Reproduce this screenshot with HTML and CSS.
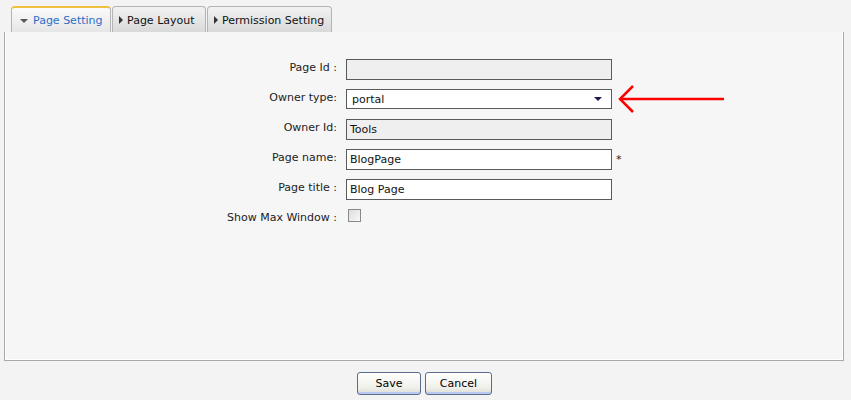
FILE: index.html
```html
<!DOCTYPE html>
<html>
<head>
<meta charset="utf-8">
<link rel="stylesheet" href="styles.css">
</head>
<body>
<div class="tabs">
  <div class="tab active"><span class="tri-down"></span>Page Setting</div>
  <div class="tab"><span class="tri-right"></span>Page Layout</div>
  <div class="tab"><span class="tri-right"></span>Permission Setting</div>
</div>
<div class="panel">
  <div class="form">
    <label>Page Id :</label>
    <div class="field readonly"></div>
    <span></span>

    <label>Owner type:</label>
    <div class="field select">portal<span class="sel-arrow"></span></div>
    <span></span>

    <label>Owner Id:</label>
    <div class="field readonly">Tools</div>
    <span></span>

    <label>Page name:</label>
    <div class="field">BlogPage</div>
    <span class="star">*</span>

    <label>Page title :</label>
    <div class="field">Blog Page</div>
    <span></span>

    <label>Show Max Window :</label>
    <div class="checkrow"><span class="checkbox"></span></div>
    <span></span>
  </div>
</div>
<div class="buttons">
  <button class="btn save">Save</button>
  <button class="btn cancel">Cancel</button>
</div>
<svg class="annot" width="120" height="40" viewBox="0 0 120 40">
  <path d="M4 20 H108" stroke="#ff0000" stroke-width="2.5" fill="none"/>
  <path d="M17 7 L4 20 L17 33" stroke="#ff0000" stroke-width="2.5" fill="none" stroke-linejoin="miter"/>
</svg>
</body>
</html>
```

FILE: styles.css
```css
html, body {
  margin: 0;
  padding: 0;
  background: #f3f3f3;
  font-family: "DejaVu Sans", Verdana, sans-serif;
  font-size: 11px;
  color: #222;
}
body {
  width: 851px;
  height: 400px;
  position: relative;
  overflow: hidden;
}
.tabs {
  display: flex;
  padding: 6px 0 0 11px;
  gap: 1px;
  height: 26px;
}
.tab {
  box-sizing: border-box;
  height: 26px;
  display: flex;
  align-items: center;
  padding: 1px 6px 0 6px;
  border: 1px solid #b4b4b4;
  border-bottom: none;
  border-radius: 4px 4px 0 0;
  background: linear-gradient(#f2f2f2, #d9d9d9);
  color: #111;
}
.tab.active {
  background: linear-gradient(#fafafa, #e6e6e6);
  border-top: 2px solid #f0c040;
  color: #2b6fc8;
  padding-top: 0;
}
.tab:nth-child(1) { width: 100px; }
.tab:nth-child(2) { width: 94px; }
.tab:nth-child(3) { width: 125px; }
.tri-down {
  width: 0; height: 0;
  border-left: 4px solid transparent;
  border-right: 4px solid transparent;
  border-top: 4px solid #555;
  margin: 2px 5px 0 2px;
}
.tri-right {
  width: 0; height: 0;
  border-top: 4px solid transparent;
  border-bottom: 4px solid transparent;
  border-left: 4px solid #333;
  margin: 0 4px 0 0;
}
.panel {
  box-sizing: border-box;
  margin-left: 4px;
  width: 840px;
  height: 329px;
  background: #f6f6f6;
  border: 1px solid #a8a8a8;
  border-top: none;
  box-shadow: inset 1px 0 0 #fff, inset -1px -1px 0 #fff;
  padding-top: 27px;
}
.form {
  display: grid;
  grid-template-columns: 332px 266px 20px;
  column-gap: 9px;
  row-gap: 9px;
  grid-auto-rows: 21px;
}
.form label {
  text-align: right;
  padding-top: 2px;
  color: #222;
}
.field {
  box-sizing: border-box;
  height: 21px;
  border: 1px solid #5a5a5a;
  background: #fff;
  padding: 3px 3px 0 3px;
  color: #111;
  position: relative;
}
.field.readonly {
  background: #efefef;
}
.field.select {
  height: 20px;
  padding-left: 5px;
  padding-top: 3px;
}
.sel-arrow {
  position: absolute;
  right: 9px;
  top: 7px;
  width: 0; height: 0;
  border-left: 4px solid transparent;
  border-right: 4px solid transparent;
  border-top: 4px solid #1a1a50;
}
.star {
  padding-top: 4px;
  margin-left: -5px;
}
.checkbox {
  display: block;
  box-sizing: border-box;
  width: 13px;
  height: 13px;
  margin-left: 2px;
  border: 1px solid #8a8a8a;
  background: linear-gradient(135deg, #dcdcdc, #fafafa);
}
.buttons {
  display: flex;
  gap: 4px;
  margin-left: 357px;
  margin-top: 11px;
}
.btn {
  box-sizing: border-box;
  height: 23px;
  font-family: "DejaVu Sans", Verdana, sans-serif;
  font-size: 11px;
  color: #000;
  border: 1px solid #5b6d8c;
  border-radius: 3px;
  background: linear-gradient(#ffffff, #f0f0ea 70%, #dcdcd4);
  box-shadow: inset 0 -2px 0 #b8c8ee, inset 0 1px 0 #fff;
  padding: 0;
}
.btn.save { width: 64px; }
.btn.cancel { width: 67px; }
.annot {
  position: absolute;
  left: 616px;
  top: 79px;
}
```
